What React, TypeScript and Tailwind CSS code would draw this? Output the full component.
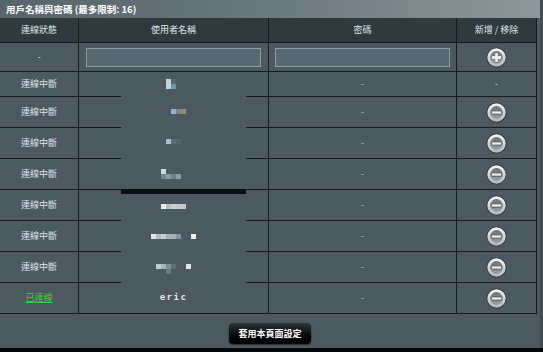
import React from 'react';

type Px = [number, number, number, number, string];

interface Row {
  status: string;
  connected?: boolean;
  user?: string;
  blob?: Px[];
  height: number;
  action: 'none' | 'remove';
  edge: 'full' | 'gap' | 'bar';
}

const rows: Row[] = [
  {
    status: '連線中斷', height: 25, action: 'none', edge: 'gap',
    blob: [[87, 7, 5, 10, '#c6d3d8'], [92, 7, 5, 5, '#56676e'], [92, 12, 5, 5, '#6f98a6']],
  },
  {
    status: '連線中斷', height: 31, action: 'remove', edge: 'gap',
    blob: [[92, 12, 5, 5, '#8fb4c2'], [97, 12, 5, 5, '#76868b'], [102, 12, 5, 5, '#8f8b75']],
  },
  {
    status: '連線中斷', height: 31, action: 'remove', edge: 'gap',
    blob: [[87, 11, 5, 5, '#b0bcc0'], [92, 11, 5, 5, '#5d6c72'], [97, 11, 5, 5, '#58676d']],
  },
  {
    status: '連線中斷', height: 31, action: 'remove', edge: 'bar',
    blob: [[82, 10, 5, 5, '#c8d8de'], [82, 15, 5, 5, '#76858b'], [87, 15, 5, 5, '#8a979b'], [92, 15, 5, 5, '#6e7d82'], [97, 15, 5, 5, '#909ca0']],
  },
  {
    status: '連線中斷', height: 31, action: 'remove', edge: 'gap',
    blob: [[82, 14, 5, 5, '#e8eef0'], [87, 14, 5, 5, '#b5bfc3'], [92, 14, 5, 5, '#c8d0d3'], [97, 14, 5, 5, '#c0c9cc'], [102, 14, 5, 5, '#bfc8cb']],
  },
  {
    status: '連線中斷', height: 31, action: 'remove', edge: 'gap',
    blob: [[72, 13, 5, 5, '#e0e6e8'], [77, 13, 5, 5, '#b0bbbf'], [82, 13, 5, 5, '#c8d0d3'], [87, 13, 5, 5, '#a6b2b7'], [92, 13, 5, 5, '#9fb0b8'], [97, 13, 5, 5, '#7f98a4'], [112, 13, 5, 5, '#eef2f3']],
  },
  {
    status: '連線中斷', height: 31, action: 'remove', edge: 'gap',
    blob: [[77, 12, 5, 5, '#c0cbd0'], [82, 12, 5, 5, '#a8b4b9'], [87, 12, 5, 5, '#7f8e94'], [87, 17, 5, 5, '#6b7b81'], [92, 12, 5, 5, '#5f6f75'], [107, 12, 5, 5, '#dfe4e6']],
  },
  { status: '已連線', connected: true, user: 'eric', height: 31, action: 'remove', edge: 'full' },
];

function RoundButton({ plus }: { plus?: boolean }) {
  const id = plus ? 'p' : 'm';
  return (
    <svg width="21" height="21" viewBox="0 0 21 21">
      <defs>
        <linearGradient id={`ring-${id}`} x1="0" y1="0" x2="0" y2="1">
          <stop offset="0" stopColor="#f6f6f6" />
          <stop offset="1" stopColor="#b3b7ba" />
        </linearGradient>
        <linearGradient id={`core-${id}`} x1="0" y1="0" x2="0" y2="1">
          <stop offset="0" stopColor="#6c7478" />
          <stop offset="1" stopColor="#9aa1a5" />
        </linearGradient>
      </defs>
      <circle cx="10.5" cy="10.5" r="10" fill="#2b3236" />
      <circle cx="10.5" cy="10.5" r="9.2" fill={`url(#ring-${id})`} />
      <circle cx="10.5" cy="10.5" r="6.4" fill={`url(#core-${id})`} />
      {plus ? (
        <g>
          <rect x="5.5" y="8.8" width="10" height="3.4" rx="1" fill="#f2f2f2" stroke="#4d5559" strokeWidth="0.6" />
          <rect x="8.8" y="5.5" width="3.4" height="10" rx="1" fill="#f2f2f2" stroke="#4d5559" strokeWidth="0.6" />
          <rect x="6" y="9.2" width="9" height="2.6" fill="#f2f2f2" />
        </g>
      ) : (
        <rect x="5.3" y="8.9" width="10.4" height="3.2" rx="1.2" fill="#eceeee" stroke="#3e4548" strokeWidth="0.7" />
      )}
    </svg>
  );
}

function EdgeLine({ edge }: { edge: Row['edge'] }) {
  if (edge === 'full') return <div className="h-px bg-[#121719]" />;
  return (
    <div className="flex h-px items-start">
      <div className="h-px w-[42px] bg-[#121719]" />
      {edge === 'bar' ? (
        <div className="relative z-10 h-[5px] w-[125px] bg-[#0b0f11]" />
      ) : (
        <div className="w-[125px]" />
      )}
      <div className="h-px flex-1 bg-[#121719]" />
    </div>
  );
}

export default function App() {
  const font = { fontFamily: '"Noto Sans CJK TC", "Noto Sans", "Liberation Sans", sans-serif' };
  return (
    <div className="flex h-[352px] w-[543px] flex-col overflow-hidden bg-[#414d53]" style={font}>
      <div className="flex w-[540px] flex-1 flex-col bg-[#4c5960]">
        {/* title */}
        <div className="flex h-[18px] items-center bg-gradient-to-r from-[#56646b] via-[#6b787e] to-[#8d979b] pl-[6px] text-[9.5px] font-bold text-white">
          用戶名稱與密碼 (最多限制: 16)
        </div>

        <div className="w-[537px] border-r border-[#161b1e]">
          {/* header */}
          <div className="grid h-[25px] grid-cols-[79px_190px_188px_79px] border-b border-[#161b1e] bg-[#2f3a3f] text-[9px] text-[#dfe5e7]">
            <div className="flex items-center justify-center border-r border-[#161b1e]">連線狀態</div>
            <div className="flex items-center justify-center border-r border-[#161b1e]">使用者名稱</div>
            <div className="flex items-center justify-center border-r border-[#161b1e]">密碼</div>
            <div className="flex items-center justify-center">新增 / 移除</div>
          </div>

          {/* input row */}
          <div className="grid h-[29px] grid-cols-[79px_190px_188px_79px] border-b border-[#161b1e] text-[9px] text-[#d9dfe1]">
            <div className="flex items-center justify-center border-r border-[#161b1e]">-</div>
            <div className="flex items-center justify-center border-r border-[#161b1e]">
              <div className="h-[19px] w-[175px] border border-[#8d9ca1] bg-[#566970]" />
            </div>
            <div className="flex items-center justify-center border-r border-[#161b1e]">
              <div className="h-[19px] w-[175px] border border-[#8d9ca1] bg-[#566970]" />
            </div>
            <div className="flex items-center justify-center">
              <RoundButton plus />
            </div>
          </div>

          {rows.map((r, i) => (
            <div
              key={i}
              className="grid grid-cols-[79px_190px_188px_79px] text-[9px] text-[#dde3e5]"
              style={{ height: r.height }}
            >
              <div className="flex items-center justify-center border-r border-b border-[#161b1e]">
                {r.connected ? (
                  <span className="text-[#3fcf3f] underline">{r.status}</span>
                ) : (
                  r.status
                )}
              </div>
              <div className="flex flex-col border-r border-[#161b1e]">
                <div className="relative flex flex-1 items-center justify-center">
                  {r.user ? (
                    <span className="text-[9px] font-bold tracking-[1.5px] text-[#e6eaeb]" style={{ fontFamily: '"DejaVu Sans Mono", monospace' }}>
                      {r.user}
                    </span>
                  ) : (
                    <svg className="absolute inset-0" width="189" height={r.height - 1}>
                      {r.blob?.map(([x, y, w, h, c], k) => (
                        <rect key={k} x={x} y={y} width={w} height={h} fill={c} />
                      ))}
                    </svg>
                  )}
                </div>
                <EdgeLine edge={r.edge} />
              </div>
              <div className="flex items-center justify-center border-r border-b border-[#161b1e] text-[#c3cbce]">-</div>
              <div className="flex items-center justify-center border-b border-[#161b1e]">
                {r.action === 'remove' ? <RoundButton /> : <span className="text-[#d9dfe1]">-</span>}
              </div>
            </div>
          ))}
        </div>

        <div className="flex flex-1 justify-center pt-[9px]">
          <button className="h-[21px] w-[82px] rounded-[4px] bg-gradient-to-b from-[#30373a] via-[#0d1012] to-[#000000] text-[9px] font-bold text-white shadow-[0_1px_2px_rgba(0,0,0,0.6)]">
            套用本頁面設定
          </button>
        </div>
      </div>
      <div className="h-[4px] bg-[#050607]" />
    </div>
  );
}
